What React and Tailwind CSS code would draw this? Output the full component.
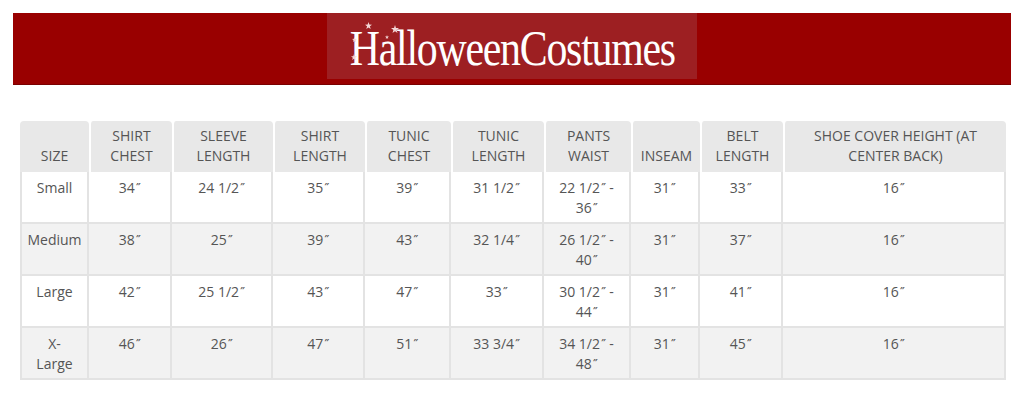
import React from "react";

const cols = [69, 83, 101, 92, 86, 93, 87, 69, 83, 223];
const headers = [
  ["SIZE"],
  ["SHIRT", "CHEST"],
  ["SLEEVE", "LENGTH"],
  ["SHIRT", "LENGTH"],
  ["TUNIC", "CHEST"],
  ["TUNIC", "LENGTH"],
  ["PANTS", "WAIST"],
  ["INSEAM"],
  ["BELT", "LENGTH"],
  ["SHOE COVER HEIGHT (AT", "CENTER BACK)"],
];
const rows = [
  [["Small"], "34", "24 1/2", "35", "39", "31 1/2", ["22 1/2\" -", "36"], "31", "33", "16"],
  [["Medium"], "38", "25", "39", "43", "32 1/4", ["26 1/2\" -", "40"], "31", "37", "16"],
  [["Large"], "42", "25 1/2", "43", "47", "33", ["30 1/2\" -", "44"], "31", "41", "16"],
  [["X-", "Large"], "46", "26", "47", "51", "33 3/4", ["34 1/2\" -", "48"], "31", "45", "16"],
];

function Inch() {
  return <span className="relative -top-[4px] font-bold text-[9px] leading-none ml-[1px]">″</span>;
}

function Val({ text }) {
  if (text.endsWith("\" -")) {
    return (
      <div>
        {text.slice(0, -3)}
        <Inch /> -
      </div>
    );
  }
  return (
    <div>
      {text}
      <Inch />
    </div>
  );
}

function Cell({ v, ci }) {
  if (ci === 0) return v.map((l, i) => <div key={i}>{l}</div>);
  const arr = Array.isArray(v) ? v : [v];
  return arr.map((l, i) => <Val key={i} text={l} />);
}

function Star({ className, size = 7 }) {
  return (
    <svg className={`absolute ${className}`} width={size} height={size} viewBox="0 0 10 10">
      <path d="M5 0 L6.2 3.6 L10 3.8 L7 6.1 L8.1 10 L5 7.8 L1.9 10 L3 6.1 L0 3.8 L3.8 3.6 Z" fill="#f3d6d6" />
    </svg>
  );
}

export default function App() {
  return (
    <div className="w-[1024px] h-[400px] bg-white overflow-hidden" style={{ fontFamily: '"Open Sans", "Noto Sans", sans-serif' }}>
      <div className="mx-[13px] mt-[13px] h-[72px] bg-[#990000] border-b border-[#7a0000] flex justify-center">
        <div className="relative w-[370px] h-[66px] bg-[#9d1f22] flex items-center justify-center">
          <span
            className="text-white text-[51px] leading-none tracking-[-1.5px] mt-[4px]"
            style={{ fontFamily: '"Liberation Serif", "DejaVu Serif", serif', transform: "scaleX(0.82)" }}
          >
            HalloweenCostumes
          </span>
          <Star className="left-[38px] top-[9px]" size={7} />
          <Star className="left-[64px] top-[12px]" size={8} />
          <Star className="left-[25px] top-[24px]" size={5} />
          <Star className="left-[58px] top-[22px]" size={4} />
          <Star className="left-[24px] top-[41px]" size={6} />
        </div>
      </div>

      <div className="mt-[36px] ml-[20px]">
        <table className="border-separate border-spacing-0 text-[14px] text-[#555] text-center" style={{ tableLayout: "fixed", width: 986 }}>
          <colgroup>
            {cols.map((w, i) => (
              <col key={i} style={{ width: w }} />
            ))}
          </colgroup>
          <thead>
            <tr>
              {headers.map((h, i) => (
                <th
                  key={i}
                  className={`h-[51px] bg-[#e8e8e8] font-normal align-bottom leading-[20px] pb-[6px] px-1 rounded-t-[4px] border-white ${i > 0 ? "border-l-2" : ""}`}
                >
                  {h.map((l, j) => (
                    <div key={j}>{l}</div>
                  ))}
                </th>
              ))}
            </tr>
          </thead>
          <tbody>
            {rows.map((r, ri) => (
              <tr key={ri} className={ri % 2 === 1 ? "bg-[#f2f2f2]" : "bg-white"}>
                {r.map((c, ci) => (
                  <td
                    key={ci}
                    className={`h-[52px] align-top leading-[20px] pt-[6px] px-1 border-b-2 border-r-2 border-[#e3e3e3] ${ci === 0 ? "border-l-2" : ""}`}
                  >
                    <Cell v={c} ci={ci} />
                  </td>
                ))}
              </tr>
            ))}
          </tbody>
        </table>
      </div>
    </div>
  );
}
